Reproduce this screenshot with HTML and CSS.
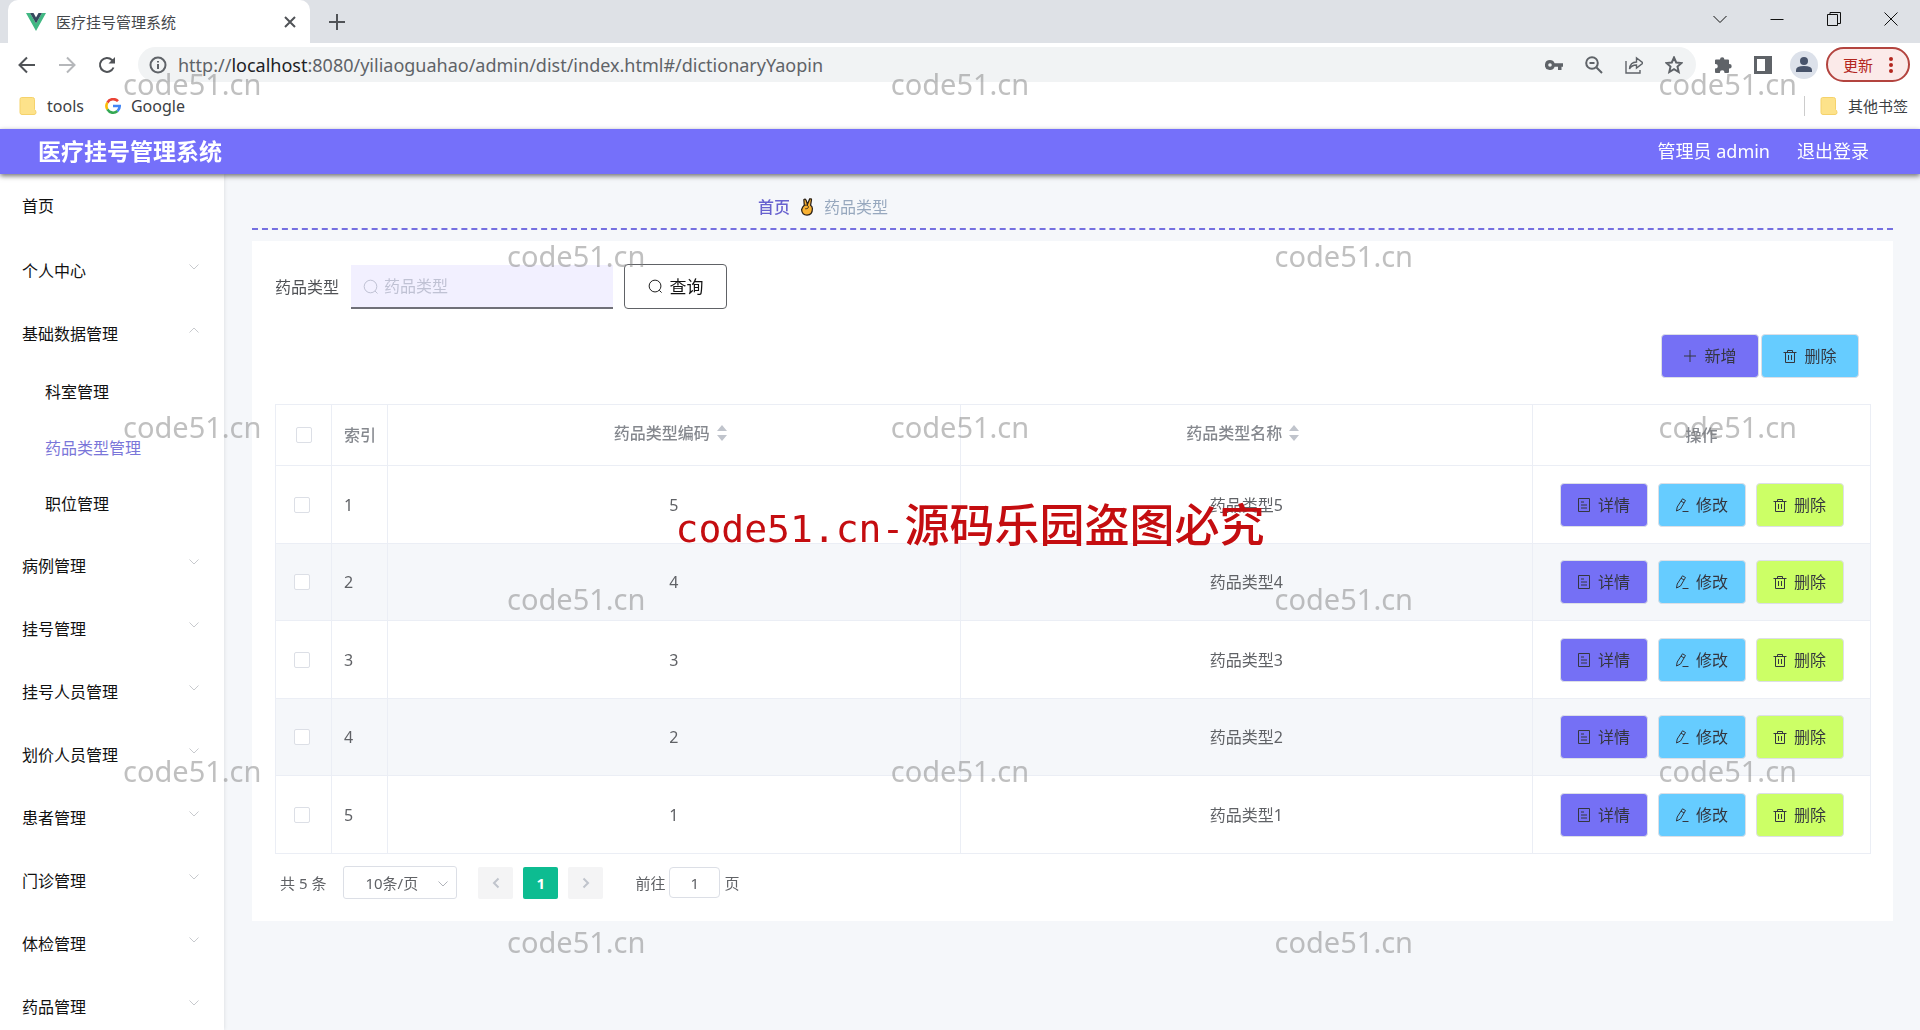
FILE: index.html
```html
<!DOCTYPE html>
<html lang="zh-CN">
<head>
<meta charset="utf-8">
<title>医疗挂号管理系统</title>
<link rel="stylesheet" href="styles.css">
</head>
<body>
<svg class="defs" aria-hidden="true">
  <symbol id="i-down" viewBox="0 0 12 12"><path d="M1.500 3.500 6 8l4.500-4.500"/></symbol>
  <symbol id="i-up" viewBox="0 0 12 12"><path d="M1.500 8.500 6 4l4.500 4.500"/></symbol>
  <symbol id="i-search" viewBox="0 0 16 16"><circle cx="7.500" cy="7.500" r="6.300"/><path d="m12 12 2.500 2.500"/></symbol>
  <symbol id="i-plus" viewBox="0 0 14 14"><path d="M7 1v12M1 7h12"/></symbol>
  <symbol id="i-trash" viewBox="0 0 14 14"><path d="M.5 3.500h13M4.500 3.500v-2h5v2M2.500 3.500v10h9v-10M5.500 6v5M8.500 6v5"/></symbol>
  <symbol id="i-doc" viewBox="0 0 14 14"><path d="M1.500.5h11v13h-11zM4 4h3M4 7h6M4 10h6"/></symbol>
  <symbol id="i-edit" viewBox="0 0 14 14"><path d="M7.500.8 10.500 2.500 5.500 11 1.500 13 2.200 9zM6 3.200l3 1.700M7.500 13.500H13.500"/></symbol>
  <symbol id="i-folder" viewBox="0 0 18 20"><path d="M2.500 1.500h11q2 0 2 2v10q1.500 1 1.500 3t-2 2h-12q-2 0-2-2v-13q0-2 1.500-2z" fill="#fde28a" stroke="#f5d26b"/></symbol>
</svg>

<div class="browser">
  <div class="tabs">
    <div class="tab">
      <svg class="vue" viewBox="0 0 20 18"><path d="M0 0h4l6 10.500L16 0h4L10 18z" fill="#41b883"/><path d="M4 0h3.500L10 4.500 12.500 0H16l-6 10.500z" fill="#35495e"/></svg>
      <span class="tab-title">医疗挂号管理系统</span>
      <button class="bare" aria-label="关闭标签页"><svg class="line s12 thick" viewBox="0 0 12 12"><path d="m1 1 10 10M11 1 1 11"/></svg></button>
    </div>
    <button class="bare" aria-label="新标签页"><svg class="line s16 thick" viewBox="0 0 16 16"><path d="M8 0v16M0 8h16"/></svg></button>
    <div class="window">
      <button class="bare" aria-label="标签列表"><svg class="line s16" viewBox="0 0 16 16"><path d="m1.500 5 6.500 6.500L14.500 5"/></svg></button>
      <button class="bare" aria-label="最小化"><svg class="line s16" viewBox="0 0 16 16"><path d="M1.500 8.500h13"/></svg></button>
      <button class="bare" aria-label="还原"><svg class="line s16" viewBox="0 0 16 16"><path d="M1.500 3.500h10v11h-10zM4 3.500v-2h10.500v11h-3"/></svg></button>
      <button class="bare" aria-label="关闭"><svg class="line s16" viewBox="0 0 16 16"><path d="m1.500 1.500 13 13m0-13-13 13"/></svg></button>
    </div>
  </div>
  <div class="toolbar">
    <button class="bare" aria-label="后退"><svg class="line s18 thick" viewBox="0 0 18 18"><path d="M17 9H2m7-7.500L1.500 9 9 16.500"/></svg></button>
    <button class="bare dim" aria-label="前进"><svg class="line s18 thick" viewBox="0 0 18 18"><path d="M1 9h15M9 1.500 16.500 9 9 16.500"/></svg></button>
    <button class="bare" aria-label="刷新"><svg class="line s18 thick" viewBox="0 0 18 18"><path d="M15.500 11.500A7 7 0 1 1 14 4l2 2"/><path d="M17 1v6.500h-6.500z" fill="currentColor" stroke="none"/></svg></button>
    <div class="address">
      <svg class="line s18 thick" viewBox="0 0 18 18"><circle cx="9" cy="9" r="7.500"/><path d="M9 8v5M9 5v1.500"/></svg>
      <span class="url">http://<b>localhost</b>:8080/yiliaoguahao/admin/dist/index.html#/dictionaryYaopin</span>
      <div class="tools">
        <svg class="s18" viewBox="0 0 18 18"><path fill="currentColor" fill-rule="evenodd" d="M5 4a5 5 0 0 1 4.600 3.200H18v3.600h-1.500V14H13v-3.200H9.600A5 5 0 1 1 5 4m0 3.200a1.800 1.800 0 1 0 0 3.600 1.800 1.800 0 0 0 0-3.600"/></svg>
        <svg class="line s18 thick" viewBox="0 0 18 18"><circle cx="7" cy="7" r="5.800"/><path d="m11.500 11.500 5.500 5.500M4.500 7h5"/></svg>
        <svg class="line s18" viewBox="0 0 18 18"><path stroke-width="1.400" d="M1 5v12h14v-3M4.500 13c.5-5 3-7 7-7V2L18 7l-6.500 5V9C8.500 9 6 10 4.500 13z"/></svg>
        <svg class="line s18 thick" viewBox="0 0 18 18"><path d="m9 1.500 2.200 5 5.300.5-4 3.600 1.200 5.400L9 13.200 4.300 16l1.200-5.400-4-3.600 5.300-.5z"/></svg>
      </div>
    </div>
    <svg class="s18 gap-ext" viewBox="0 0 18 18"><path fill="currentColor" d="M6 3.500a2.200 2.200 0 0 1 4.400 0H14q1 0 1 1V8h.5a2.200 2.200 0 0 1 0 4.400H15V16q0 1-1 1h-3.500v-.5a2.300 2.300 0 0 0-4.600 0v.5H2q-1 0-1-1v-3.500h.5a2.300 2.300 0 0 0 0-4.600H1V4.500q0-1 1-1z"/></svg>
    <svg class="s18 gap-panel" viewBox="0 0 18 18"><path fill="currentColor" fill-rule="evenodd" d="M0 0h18v18H0zm3 3v12h8V3z"/></svg>
    <svg class="avatar" viewBox="0 0 28 28"><circle cx="14" cy="14" r="14" fill="#dce1ea"/><circle cx="14" cy="10" r="4" fill="#48546b"/><path d="M6 21v-2q0-4 8-4t8 4v2z" fill="#48546b"/></svg>
    <button class="update">更新<svg class="dots" viewBox="0 0 4 16"><circle cx="2" cy="2" r="2"/><circle cx="2" cy="8" r="2"/><circle cx="2" cy="14" r="2"/></svg></button>
  </div>
  <div class="bookmarks">
    <a href="#"><svg class="folder"><use href="#i-folder"/></svg>tools</a>
    <a href="#"><svg class="s16 google" viewBox="0 0 16 16"><g fill="none" stroke-width="2.600"><path d="M13 3.200A6.600 6.600 0 0 0 2.400 4.600" stroke="#ea4335"/><path d="M2.400 4.600a6.600 6.600 0 0 0 0 6.800" stroke="#fbbc05"/><path d="M2.400 11.400A6.600 6.600 0 0 0 12.500 13" stroke="#34a853"/><path d="M12.500 13a6.600 6.600 0 0 0 2.200-5H8" stroke="#4285f4"/></g></svg>Google</a>
    <a class="other" href="#"><svg class="folder"><use href="#i-folder"/></svg>其他书签</a>
  </div>
</div>

<header class="header">
  <h1>医疗挂号管理系统</h1>
  <span class="user">管理员 admin</span>
  <a href="#">退出登录</a>
</header>

<div class="body">
  <nav class="side">
    <a class="item home" href="#">首页</a>
    <a class="item" href="#">个人中心<svg class="line"><use href="#i-down"/></svg></a>
    <a class="item open" href="#">基础数据管理<svg class="line"><use href="#i-up"/></svg></a>
    <div class="sub">
      <a href="#">科室管理</a>
      <a class="active" href="#">药品类型管理</a>
      <a href="#">职位管理</a>
    </div>
    <a class="item" href="#">病例管理<svg class="line"><use href="#i-down"/></svg></a>
    <a class="item" href="#">挂号管理<svg class="line"><use href="#i-down"/></svg></a>
    <a class="item" href="#">挂号人员管理<svg class="line"><use href="#i-down"/></svg></a>
    <a class="item" href="#">划价人员管理<svg class="line"><use href="#i-down"/></svg></a>
    <a class="item" href="#">患者管理<svg class="line"><use href="#i-down"/></svg></a>
    <a class="item" href="#">门诊管理<svg class="line"><use href="#i-down"/></svg></a>
    <a class="item" href="#">体检管理<svg class="line"><use href="#i-down"/></svg></a>
    <a class="item" href="#">药品管理<svg class="line"><use href="#i-down"/></svg></a>
  </nav>

  <main class="main">
    <div class="crumbs">
      <a href="#">首页</a>
      <svg class="hand" viewBox="0 0 14 20"><path d="M2 10.500 4 8 3.500 2q1.500-1.500 2.500.5L7.500 7 10 1q2-.5 2 1l-1 6q2 1.500 2 4 0 7-6 7-5.500 0-6-6z" fill="#f9b233" stroke="#2b2117" stroke-width="1.400"/><path d="M4 8q4-1 4.500 1.500T5 12" fill="none" stroke="#2b2117"/></svg>
      <span>药品类型</span>
    </div>
    <section class="card">
      <form class="search">
        <label for="kind">药品类型</label>
        <div class="field"><svg class="line"><use href="#i-search"/></svg><input id="kind" type="text" placeholder="药品类型"></div>
        <button class="query" type="button"><svg class="line"><use href="#i-search"/></svg>查询</button>
      </form>
      <div class="actions">
        <button class="btn wide violet"><svg class="line"><use href="#i-plus"/></svg>新增</button>
        <button class="btn wide blue"><svg class="line"><use href="#i-trash"/></svg>删除</button>
      </div>
      <table class="grid">
        <colgroup><col class="c-small"><col class="c-small"><col><col><col class="c-ops"></colgroup>
        <thead>
          <tr>
            <th class="pick"><input type="checkbox" aria-label="全选"></th>
            <th class="idx">索引</th>
            <th class="sortable"><span class="sort">药品类型编码<svg viewBox="0 0 10 16"><path d="M5 0l5 6H0zM5 16l5-6H0z"/></svg></span></th>
            <th class="sortable"><span class="sort">药品类型名称<svg viewBox="0 0 10 16"><path d="M5 0l5 6H0zM5 16l5-6H0z"/></svg></span></th>
            <th>操作</th>
          </tr>
        </thead>
        <tbody>
          <tr><td class="pick"><input type="checkbox" aria-label="选择第1行"></td><td class="idx">1</td><td>5</td><td>药品类型5</td><td><div class="ops"><button class="btn violet"><svg class="line"><use href="#i-doc"/></svg>详情</button><button class="btn blue"><svg class="line"><use href="#i-edit"/></svg>修改</button><button class="btn lime"><svg class="line"><use href="#i-trash"/></svg>删除</button></div></td></tr>
          <tr><td class="pick"><input type="checkbox" aria-label="选择第2行"></td><td class="idx">2</td><td>4</td><td>药品类型4</td><td><div class="ops"><button class="btn violet"><svg class="line"><use href="#i-doc"/></svg>详情</button><button class="btn blue"><svg class="line"><use href="#i-edit"/></svg>修改</button><button class="btn lime"><svg class="line"><use href="#i-trash"/></svg>删除</button></div></td></tr>
          <tr><td class="pick"><input type="checkbox" aria-label="选择第3行"></td><td class="idx">3</td><td>3</td><td>药品类型3</td><td><div class="ops"><button class="btn violet"><svg class="line"><use href="#i-doc"/></svg>详情</button><button class="btn blue"><svg class="line"><use href="#i-edit"/></svg>修改</button><button class="btn lime"><svg class="line"><use href="#i-trash"/></svg>删除</button></div></td></tr>
          <tr><td class="pick"><input type="checkbox" aria-label="选择第4行"></td><td class="idx">4</td><td>2</td><td>药品类型2</td><td><div class="ops"><button class="btn violet"><svg class="line"><use href="#i-doc"/></svg>详情</button><button class="btn blue"><svg class="line"><use href="#i-edit"/></svg>修改</button><button class="btn lime"><svg class="line"><use href="#i-trash"/></svg>删除</button></div></td></tr>
          <tr><td class="pick"><input type="checkbox" aria-label="选择第5行"></td><td class="idx">5</td><td>1</td><td>药品类型1</td><td><div class="ops"><button class="btn violet"><svg class="line"><use href="#i-doc"/></svg>详情</button><button class="btn blue"><svg class="line"><use href="#i-edit"/></svg>修改</button><button class="btn lime"><svg class="line"><use href="#i-trash"/></svg>删除</button></div></td></tr>
        </tbody>
      </table>
      <div class="pager">
        <span>共 5 条</span>
        <div class="size"><select aria-label="每页条数"><option>10条/页</option></select><svg class="line"><use href="#i-down"/></svg></div>
        <div class="pages">
          <button aria-label="上一页"><svg class="line s12 thick" viewBox="0 0 12 12"><path d="M8.500 1.500 4 6l4.500 4.500"/></svg></button>
          <button class="current">1</button>
          <button aria-label="下一页"><svg class="line s12 thick" viewBox="0 0 12 12"><path d="M3.500 1.500 8 6l-4.500 4.500"/></svg></button>
        </div>
        <label class="jump">前往<input type="text" value="1">页</label>
      </div>
    </section>
  </main>
</div>

<div class="marks" aria-hidden="true">
  <div class="mark-row"><span>code51.cn</span><span>code51.cn</span><span>code51.cn</span></div>
  <div class="mark-row odd"><span>code51.cn</span><span>code51.cn</span></div>
  <div class="mark-row"><span>code51.cn</span><span>code51.cn</span><span>code51.cn</span></div>
  <div class="mark-row odd"><span>code51.cn</span><span>code51.cn</span></div>
  <div class="mark-row"><span>code51.cn</span><span>code51.cn</span><span>code51.cn</span></div>
  <div class="mark-row odd"><span>code51.cn</span><span>code51.cn</span></div>
</div>
<div class="notice"><span>code51.cn-</span>源码乐园盗图必究</div>
</body>
</html>
```
FILE: styles.css
```css
* { box-sizing: border-box; }
body {
  margin: 0;
  height: 100vh;
  display: flex;
  flex-direction: column;
  position: relative;
  overflow: hidden;
  font: 16px/24px "Noto Sans", "Noto Sans CJK SC", sans-serif;
  color: #606266;
  background: #f5f7fa;
}
a { color: inherit; text-decoration: none; }
button, input, select { font: inherit; color: inherit; margin: 0; }
button { cursor: pointer; }
svg { flex: none; display: block; }
.defs { position: absolute; width: 0; height: 0; }
.line { fill: none; stroke: currentColor; stroke-width: 1; }
.thick { stroke-width: 2; }
.s12 { width: 12px; height: 12px; }
.s16 { width: 16px; height: 16px; }
.s18 { width: 18px; height: 18px; }
.bare { border: 0; padding: 0; background: none; color: #505357; }

/* browser frame */
.browser { flex: none; background: #fff; color: #5f6368; }
.tabs { height: 43px; display: flex; align-items: center; background: #dee1e6; }
.tab {
  align-self: stretch;
  width: 302px;
  margin: 0 19px 0 8px;
  padding: 0 14px 0 18px;
  display: flex;
  align-items: center;
  border-radius: 10px 10px 0 0;
  background: #fff;
}
.vue { width: 20px; height: 18px; }
.tab-title { flex: 1; padding-left: 10px; font-size: 15px; color: #45484c; }
.window { margin-left: auto; padding: 0 21px 6px 0; display: flex; gap: 41px; }
.window .bare { color: #111; }
.toolbar { height: 43px; padding: 0 10px 0 18px; display: flex; align-items: center; }
.toolbar > .bare { margin-right: 22px; }
.toolbar > .dim { color: #b5b7ba; }
.address {
  flex: 1;
  height: 35px;
  padding: 0 13px 0 11px;
  display: flex;
  align-items: center;
  gap: 11px;
  border-radius: 18px;
  background: #f1f3f4;
}
.url { flex: 1; font-size: 18px; }
.url b { font-weight: 400; color: #202124; }
.tools { display: flex; gap: 22px; }
.gap-ext { margin-left: 18px; }
.gap-panel { margin-left: 22px; }
.avatar { width: 28px; height: 28px; margin: 0 8px 0 18px; }
.update {
  width: 84px;
  height: 35px;
  padding: 0 15px;
  display: flex;
  align-items: center;
  justify-content: space-between;
  border: 2px solid #b3443f;
  border-radius: 18px;
  background: #fbeae9;
  color: #b3261e;
  font-size: 15px;
}
.dots { width: 4px; height: 16px; fill: #b3261e; }
.bookmarks { height: 43px; padding: 0 12px 3px 19px; display: flex; align-items: center; gap: 21px; color: #3c4043; }
.bookmarks a { display: flex; align-items: center; gap: 10px; }
.folder { width: 18px; height: 20px; }
.other { margin-left: auto; padding-left: 15px; border-left: 1px solid #ccc; font-size: 15px; line-height: 20px; }

/* application header */
.header {
  flex: none;
  height: 45px;
  padding: 0 51px 2px 38px;
  display: flex;
  align-items: center;
  gap: 27px;
  position: relative;
  z-index: 1;
  background: #7570fa;
  box-shadow: 0 2px 5px rgba(0, 0, 0, .55);
  color: #fff;
  font-size: 18px;
}
.header h1 { margin: 0; flex: 1; font-size: 23px; line-height: 30px; }

.body { flex: 1; min-height: 0; display: flex; }

/* side menu */
.side {
  flex: none;
  width: 224px;
  padding-top: 2px;
  overflow-y: auto;
  scrollbar-width: none;
  background: #fff;
  box-shadow: 0 0 4px rgba(0, 0, 0, .12);
  color: #111;
}
.item {
  height: 60px;
  margin-bottom: 3px;
  padding: 0 24px 0 22px;
  display: flex;
  align-items: center;
  justify-content: space-between;
}
.item svg { width: 12px; height: 12px; margin-bottom: 8px; color: #c8cace; }
.home { margin-bottom: 5px; }
.open { margin-bottom: 0; }
.sub { margin-bottom: 4px; }
.sub a { display: block; padding-left: 45px; line-height: 56px; }
.sub .active { color: #7a76d9; }

/* content */
.main { flex: 1; min-width: 0; padding: 0 27px 0 28px; overflow: hidden; }
.crumbs {
  height: 56px;
  margin-bottom: 11px;
  padding: 11px 0 0 506px;
  display: flex;
  align-items: center;
  gap: 10px;
  border-bottom: 2px dashed #7570e0;
  color: #97a8be;
}
.crumbs a { color: #6862cf; font-weight: 500; }
.hand { width: 14px; height: 18px; }
.card { padding: 23px 22px 22px 23px; background: #fff; }
.search { display: flex; align-items: center; color: #505256; }
.search label { margin-right: 12px; }
.field { position: relative; width: 262px; margin-right: 11px; color: #c0c2d4; }
.field svg { position: absolute; left: 12px; top: 14px; width: 16px; height: 16px; }
.field input {
  width: 100%;
  height: 44px;
  padding: 0 12px 0 33px;
  border: 0;
  border-bottom: 2px solid #707078;
  background: #f2f0ff;
}
.field input::placeholder { color: #c0c2d4; }
.query {
  width: 103px;
  height: 45px;
  display: flex;
  align-items: center;
  justify-content: center;
  gap: 7px;
  border: 1px solid #606266;
  border-radius: 4px;
  background: #fff;
  color: #111;
  font-size: 17px;
}
.query svg { width: 15px; height: 15px; }
.actions { margin: 25px 12px 26px 0; display: flex; justify-content: flex-end; gap: 2px; }
.btn {
  width: 88px;
  height: 44px;
  padding: 0;
  display: flex;
  align-items: center;
  justify-content: center;
  gap: 7px;
  border: 1px solid #dcdfe6;
  border-radius: 4px;
  color: #34363f;
}
.btn svg { width: 14px; height: 14px; }
.wide { width: 98px; }
.violet { background: #7570f5; }
.blue { background: #66ccff; }
.lime { background: #ccff66; }

.grid {
  width: 100%;
  table-layout: fixed;
  border-collapse: collapse;
  text-align: center;
}
.c-small { width: 56px; }
.c-ops { width: 338px; }
.grid th, .grid td { padding: 0; border: 1px solid #ebeef5; }
.grid th { height: 61px; color: #85888e; font-weight: 500; }
.grid .sortable { padding-bottom: 4px; }
.grid td { height: 78px; }
.grid tbody tr:nth-child(even) { background: #f5f7fa; }
.grid tbody tr:nth-child(even) td { height: 77px; }
.grid .idx { padding-left: 12px; text-align: left; }
.grid td.pick { padding-right: 4px; }
.pick input {
  appearance: none;
  width: 16px;
  height: 16px;
  display: block;
  margin: 0 auto;
  border: 1px solid #dcdfe6;
  border-radius: 2px;
  background: #fff;
}
.sort { display: inline-flex; align-items: center; }
.sort svg { width: 10px; height: 16px; margin: 0 7px; fill: #c0c4cc; }
.ops { display: flex; justify-content: center; gap: 10px; }

.pager { margin-top: 12px; padding-left: 5px; display: flex; align-items: center; font-size: 15px; }
.size { position: relative; width: 114px; margin: 0 21px 0 17px; }
.size select {
  appearance: none;
  width: 100%;
  height: 33px;
  padding: 0 21px;
  border: 1px solid #dcdfe6;
  border-radius: 3px;
  background: #fff;
}
.size svg { position: absolute; right: 8px; top: 12px; width: 12px; height: 12px; color: #b0b3ba; }
.pages { display: flex; gap: 10px; }
.pages button {
  width: 35px;
  height: 32px;
  padding: 0;
  display: grid;
  place-items: center;
  border: 0;
  border-radius: 2px;
  background: #f4f4f5;
  color: #c0c4cc;
}
.pages .current { background: #0dbc91; color: #fff; font-weight: 700; }
.jump { margin-left: 32px; display: flex; align-items: center; gap: 4px; }
.jump input { width: 51px; height: 31px; padding: 0; border: 1px solid #dcdfe6; border-radius: 4px; background: #fff; text-align: center; }

/* watermark layer */
.marks {
  position: absolute;
  inset: 0;
  z-index: 2;
  pointer-events: none;
  display: grid;
  grid-template-rows: repeat(6, 1fr);
  font-size: 29px;
  line-height: 168px;
  color: rgba(130, 130, 130, .5);
}
.mark-row { display: flex; justify-content: space-between; padding: 0 123px; }
.mark-row.odd { padding: 0 507px; }
.notice {
  position: absolute;
  left: 0;
  right: 0;
  top: 51%;
  z-index: 3;
  margin-top: -30px;
  padding-left: 20px;
  pointer-events: none;
  text-align: center;
  font-size: 45px;
  font-weight: 500;
  line-height: 60px;
  color: #c40d10;
}
.notice span { font-family: "DejaVu Sans Mono", monospace; font-size: 38px; }
```
